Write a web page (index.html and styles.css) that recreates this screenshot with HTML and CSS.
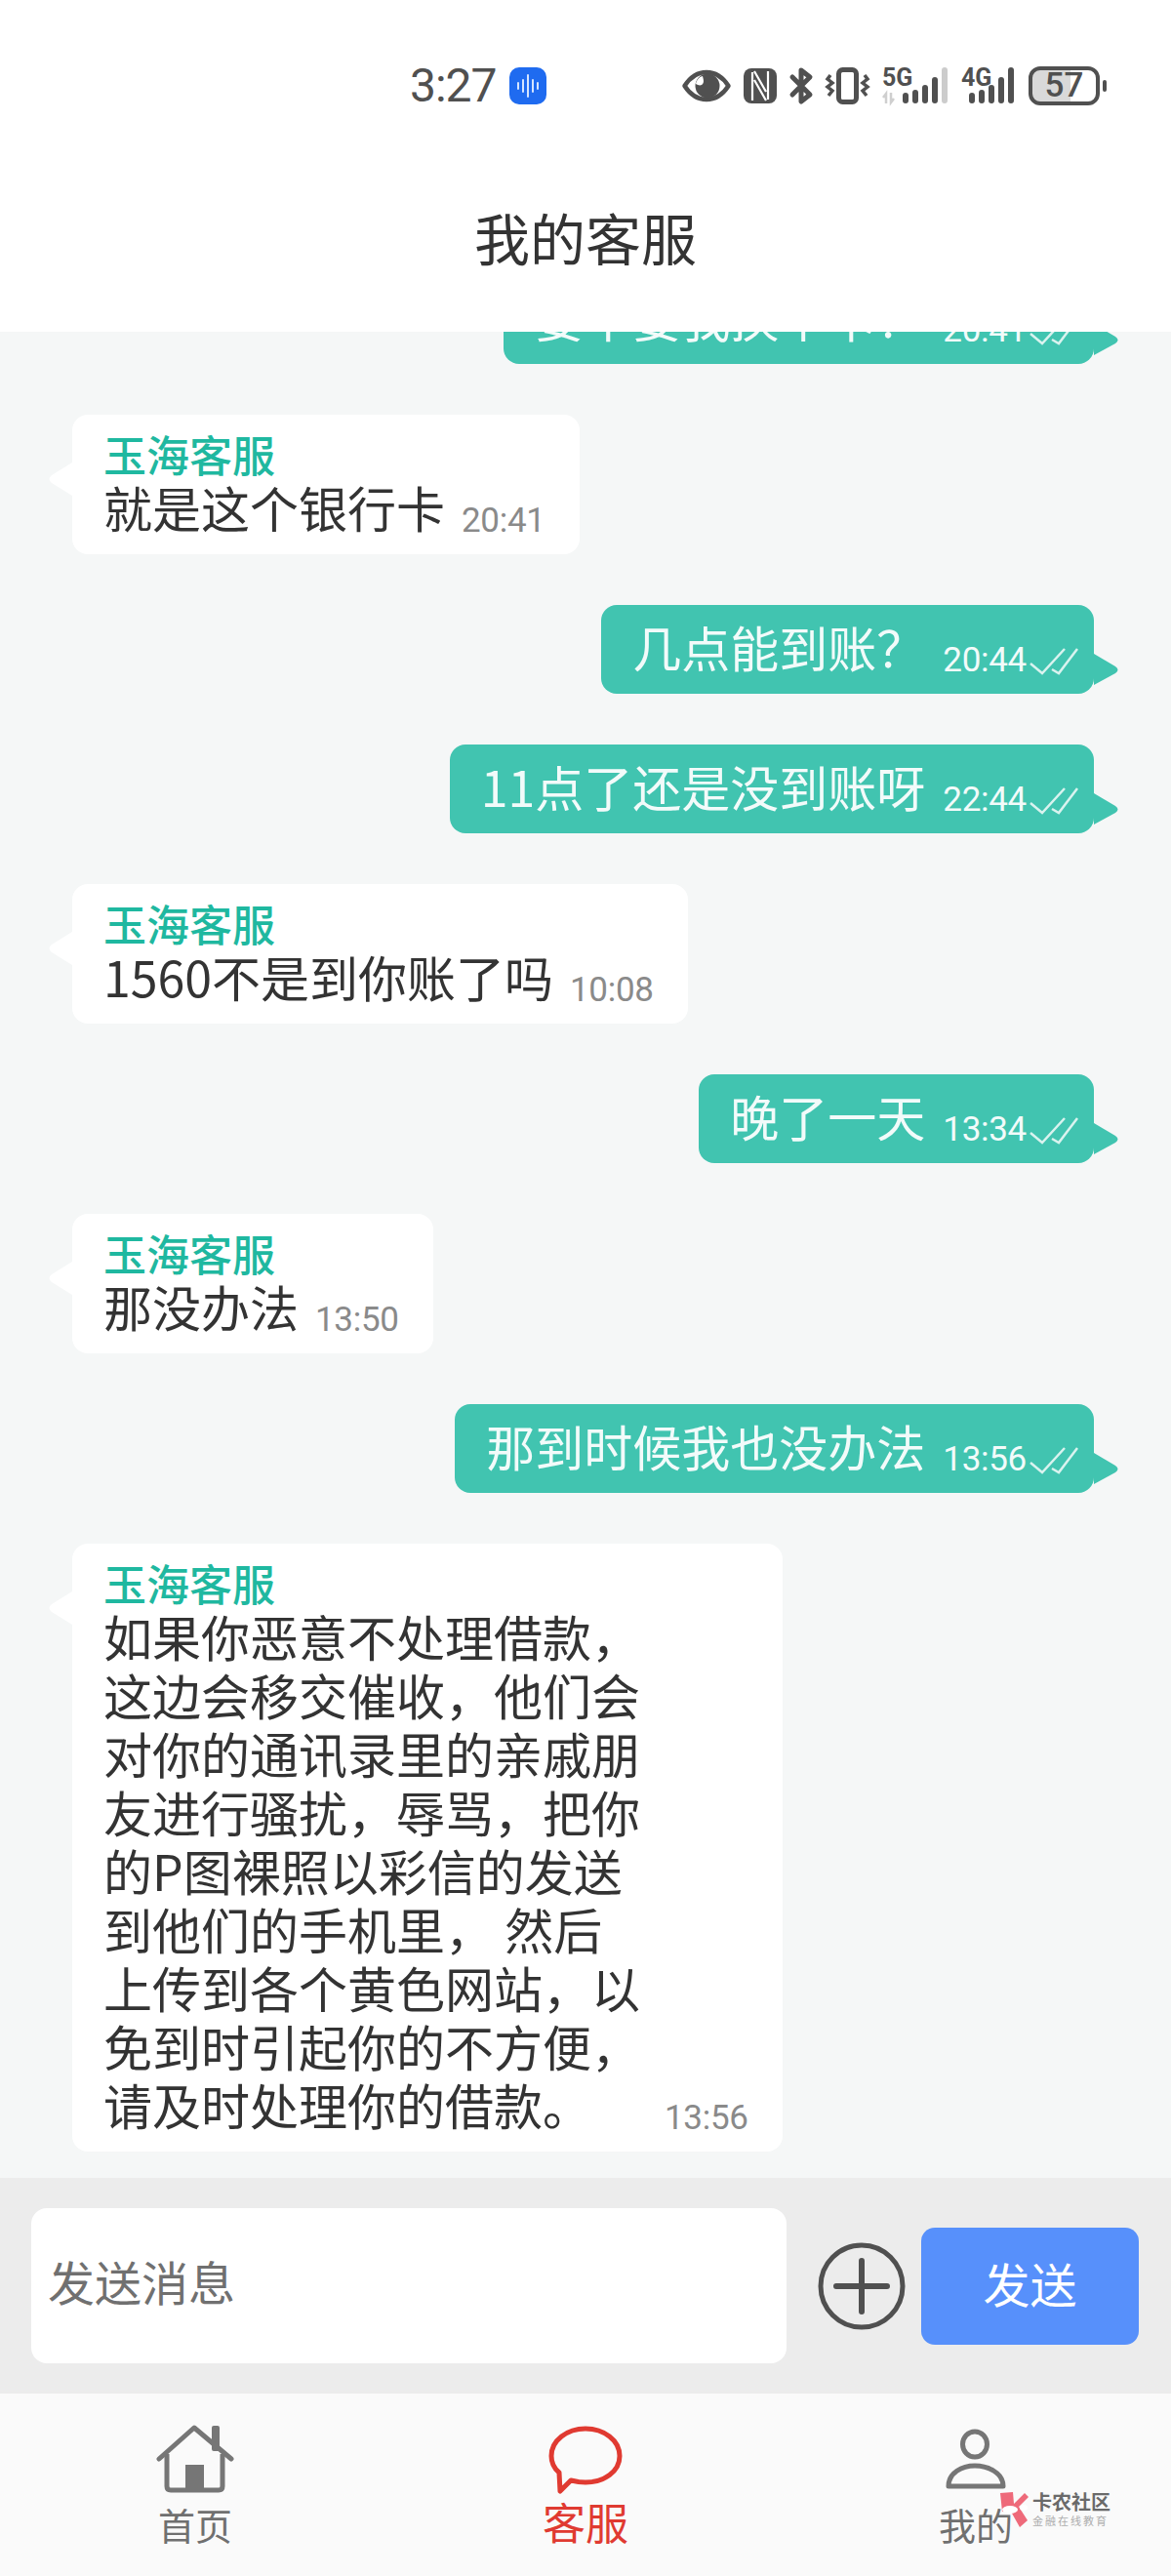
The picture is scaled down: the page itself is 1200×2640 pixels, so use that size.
FILE: index.html
```html
<!DOCTYPE html>
<html lang="zh-CN">
  <head>
    <meta charset="utf-8">
    <meta name="viewport" content="width=device-width, initial-scale=1">
    <title>我的客服</title>
    <link rel="stylesheet" href="styles.css">
  </head>
  <body>
    <div class="app">
      <header class="top">
        <div class="status">
          <span class="clock">3:27</span>
          <svg class="voice" width="38" height="38" viewBox="0 0 38 38">
            <rect width="38" height="38" rx="10" fill="#1f6bf0"/>
            <path d="M9 16v6M14 13v12M19 8v22M24 13v12M29 16v6" stroke="#d5e4ff" stroke-width="2" stroke-linecap="round"/>
          </svg>
          <div class="status-icons">
            <svg width="50" height="36" viewBox="0 0 50 36">
              <path d="M2.500 18C9 8 16 4 25 4s16 4 22.500 14C41 28 34 32 25 32S9 28 2.500 18Z" fill="none" stroke="#505050" stroke-width="4.500" stroke-linejoin="round"/>
              <circle cx="26" cy="18" r="12.500" fill="#505050"/>
              <path d="M21 8c1 4 2 7-1 9-2 1-4 0-6-1 1-4 3-7 7-8Z" fill="#fff"/>
            </svg>
            <svg width="34" height="36" viewBox="0 0 34 36">
              <rect width="34" height="36" rx="8" fill="#505050"/>
              <path d="M9 33V4M25 3v29M11 3l12 21M11 12l12 21" fill="none" stroke="#fff" stroke-width="2.200"/>
            </svg>
            <svg width="24" height="38" viewBox="0 0 24 38">
              <path d="M3 10l18 18-9 7V3l9 7L3 28" fill="none" stroke="#505050" stroke-width="5" stroke-linejoin="round" stroke-linecap="round"/>
            </svg>
            <svg width="45" height="38" viewBox="0 0 45 38">
              <rect x="13.500" y="2.500" width="18" height="33" rx="4" fill="none" stroke="#505050" stroke-width="5"/>
              <path d="M5 8L2 12l5 4-5 4 5 4-4 5M40 8l3 4-5 4 5 4-5 4 4 5" fill="none" stroke="#505050" stroke-width="3.500"/>
            </svg>
            <svg width="68" height="38" viewBox="0 0 68 38">
              <text class="net" x="0" y="19">5G</text>
              <path d="M4 37V27l-3 4M9 26v10l3-4" fill="none" stroke="#cfcfcf" stroke-width="2.500"/>
              <g fill="#505050">
                <rect x="21" y="26" width="6" height="11" rx="3"/>
                <rect x="31" y="23" width="6" height="14" rx="3"/>
                <rect x="41" y="18" width="6" height="19" rx="3"/>
                <rect x="51" y="10" width="6" height="27" rx="3"/>
              </g>
              <rect x="61" y="0" width="6" height="37" rx="3" fill="#cccccc"/>
            </svg>
            <svg width="55" height="38" viewBox="0 0 55 38">
              <text class="net" x="0" y="19">4G</text>
              <g fill="#505050">
                <rect x="8" y="26" width="6" height="11" rx="3"/>
                <rect x="18" y="23" width="6" height="14" rx="3"/>
                <rect x="28" y="18" width="6" height="19" rx="3"/>
                <rect x="38" y="10" width="6" height="27" rx="3"/>
                <rect x="48" y="0" width="6" height="37" rx="3"/>
              </g>
            </svg>
            <div class="battery">57</div>
          </div>
        </div>
        <h1 class="title">我的客服</h1>
      </header>

      <main class="chat">
        <div class="msg sent">
          <div class="text">要不要我换个卡？</div>
          <span class="time">20:41</span>
          <svg class="ticks" width="52" height="28" viewBox="0 0 52 28"><path d="M2 16l12 10L37 1M24 22l7 4L50 1"/></svg>
        </div>

        <div class="msg recv">
          <div class="name">玉海客服</div>
          <div class="line">
            <div class="text">就是这个银行卡</div>
            <span class="time">20:41</span>
          </div>
        </div>

        <div class="msg sent">
          <div class="text">几点能到账？</div>
          <span class="time">20:44</span>
          <svg class="ticks" width="52" height="28" viewBox="0 0 52 28"><path d="M2 16l12 10L37 1M24 22l7 4L50 1"/></svg>
        </div>

        <div class="msg sent">
          <div class="text">11点了还是没到账呀</div>
          <span class="time">22:44</span>
          <svg class="ticks" width="52" height="28" viewBox="0 0 52 28"><path d="M2 16l12 10L37 1M24 22l7 4L50 1"/></svg>
        </div>

        <div class="msg recv">
          <div class="name">玉海客服</div>
          <div class="line">
            <div class="text">1560不是到你账了吗</div>
            <span class="time">10:08</span>
          </div>
        </div>

        <div class="msg sent">
          <div class="text">晚了一天</div>
          <span class="time">13:34</span>
          <svg class="ticks" width="52" height="28" viewBox="0 0 52 28"><path d="M2 16l12 10L37 1M24 22l7 4L50 1"/></svg>
        </div>

        <div class="msg recv">
          <div class="name">玉海客服</div>
          <div class="line">
            <div class="text">那没办法</div>
            <span class="time">13:50</span>
          </div>
        </div>

        <div class="msg sent">
          <div class="text">那到时候我也没办法</div>
          <span class="time">13:56</span>
          <svg class="ticks" width="52" height="28" viewBox="0 0 52 28"><path d="M2 16l12 10L37 1M24 22l7 4L50 1"/></svg>
        </div>

        <div class="msg recv long">
          <div class="name">玉海客服</div>
          <div class="line">
            <div class="text">如果你恶意不处理借款，这边会移交催收，他们会对你的通讯录里的亲戚朋友进行骚扰，辱骂，把你的P图裸照以彩信的发送到他们的手机里， 然后上传到各个黄色网站，以免到时引起你的不方便，请及时处理你的借款。</div>
            <span class="time">13:56</span>
          </div>
        </div>
      </main>

      <div class="composer">
        <div class="field">发送消息</div>
        <svg class="plus" width="90" height="90" viewBox="0 0 90 90">
          <circle cx="45" cy="45" r="42" fill="none" stroke="#505050" stroke-width="5"/>
          <path d="M19 45h52M45 19v52" stroke="#505050" stroke-width="6" stroke-linecap="round"/>
        </svg>
        <div class="send">发送</div>
      </div>

      <nav class="tabs">
        <div class="tab">
          <svg width="80" height="72" viewBox="0 0 80 72">
            <rect x="57" y="2" width="8" height="26" rx="2" fill="#767676"/>
            <path d="M3 36L39 4l38 32" fill="none" stroke="#767676" stroke-width="5" stroke-linecap="round" stroke-linejoin="round"/>
            <path d="M11 31v33q0 4 4 4h49q4 0 4-4V31" fill="none" stroke="#767676" stroke-width="5"/>
            <rect x="30" y="42" width="19" height="27" fill="#767676"/>
          </svg>
          <span>首页</span>
        </div>
        <div class="tab active">
          <svg width="80" height="72" viewBox="0 0 80 72">
            <path d="M13 50C7 45 5 39 5 33 5 17 21 5 40 5s35 12 35 28-16 27-35 27c-6 0-11-1-15-2L14 69Z" fill="none" stroke="#e03a31" stroke-width="5" stroke-linejoin="round"/>
          </svg>
          <span>客服</span>
        </div>
        <div class="tab">
          <svg width="80" height="72" viewBox="0 0 80 72">
            <ellipse cx="39" cy="21" rx="12.500" ry="13" fill="none" stroke="#767676" stroke-width="5"/>
            <path d="M12 64c0-14 14-21 27-21s29 7 29 21Z" fill="none" stroke="#767676" stroke-width="5" stroke-linejoin="round"/>
          </svg>
          <span>我的</span>
        </div>
      </nav>

      <div class="watermark">
        <svg width="32" height="38" viewBox="0 0 32 38">
          <path d="M3 3l13-1 1 12L28 3l4 4-10 10 9 14-8 7-9-16H5Z" fill="#ee6a7a"/>
          <ellipse cx="13" cy="20" rx="8" ry="4" fill="#fff"/>
          <ellipse cx="27" cy="18" rx="4" ry="3" fill="#fff"/>
        </svg>
        <div class="wm-text">
          <b>卡农社区</b>
          <small>金融在线教育</small>
        </div>
      </div>
    </div>
  </body>
</html>
```

FILE: styles.css
```css
* {
  box-sizing: border-box;
}
html, body {
  margin: 0;
  padding: 0;
}
body {
  font-family: "Noto Sans CJK SC", "Noto Sans", sans-serif;
  color: #333;
  background: #fff;
}
.app {
  position: relative;
  display: flex;
  flex-direction: column;
  width: 1200px;
  height: 2640px;
  overflow: hidden;
}

/* header */
.top {
  flex: none;
  height: 340px;
  background: #fff;
}
.status {
  display: flex;
  align-items: center;
  height: 176px;
  padding: 0 66px 0 420px;
  color: #505050;
}
.clock {
  font-family: Roboto, sans-serif;
  font-size: 48px;
  line-height: 1;
  letter-spacing: -1px;
}
.voice {
  margin-left: 13px;
}
.status-icons {
  display: flex;
  align-items: center;
  gap: 13px;
  margin-left: auto;
}
.status-icons svg {
  overflow: visible;
}
.net {
  font-family: "Liberation Sans Narrow", Roboto, sans-serif;
  font-size: 25px;
  font-weight: 700;
  fill: #505050;
}
.battery {
  position: relative;
  width: 73px;
  height: 40px;
  margin-left: 1px;
  margin-right: 7px;
  border: 4px solid #505050;
  border-radius: 12px;
  background: linear-gradient(90deg, #d9d9d9 60%, transparent 60%);
  font-family: Roboto, sans-serif;
  font-size: 35px;
  font-weight: 500;
  line-height: 32px;
  text-align: center;
}
.battery::after {
  content: "";
  position: absolute;
  top: 10px;
  right: -11px;
  width: 4px;
  height: 12px;
  border-radius: 2px;
  background: #505050;
}
.title {
  margin: 0;
  font-size: 57px;
  font-weight: 400;
  line-height: 132px;
  text-align: center;
}

/* messages */
.chat {
  flex: 1;
  min-height: 0;
  display: flex;
  flex-direction: column;
  justify-content: flex-end;
  gap: 52px;
  padding: 0 79px 27px 74px;
  overflow: hidden;
  background: #f5f7f7;
}
.msg {
  position: relative;
  flex: none;
  border-radius: 16px;
}
.msg::after {
  content: "";
  position: absolute;
  width: 26px;
  height: 34px;
}
.text {
  margin: -3px 0 3px;
  font-size: 50px;
  line-height: 60px;
}
.time {
  flex: none;
  font-family: Roboto, sans-serif;
  font-size: 35px;
  line-height: 36px;
  letter-spacing: -0.3px;
}
.sent {
  display: flex;
  align-items: flex-end;
  align-self: flex-end;
  padding: 15px 15px 16px 32px;
  background: #41c4b0;
  color: #f2fbfa;
}
.sent::after {
  top: 50px;
  left: 100%;
  background: #41c4b0;
  clip-path: path("M0 0 L22 13 Q27 16.500 22 20 L0 32 Z");
}
.sent .time {
  margin-left: 18px;
}
.ticks {
  margin: 0 0 3px 2px;
  fill: none;
  stroke: #d9f3ef;
  stroke-width: 2.500;
}
.recv {
  align-self: flex-start;
  padding: 17px 35px 16px 32px;
  background: #fff;
}
.recv::after {
  top: 49px;
  right: 100%;
  background: #fff;
  clip-path: path("M26 0 L5 13 Q0 17 5 21 L26 34 Z");
}
.name {
  margin: -2px 0 2px;
  color: #1fb8a0;
  font-size: 44px;
  font-weight: 500;
  line-height: 50px;
}
.line {
  display: flex;
  align-items: flex-end;
  gap: 17px;
}
.recv .time {
  color: #8a8a8a;
}
.long .text {
  width: 558px;
}

/* input row */
.composer {
  flex: none;
  display: flex;
  align-items: center;
  height: 221px;
  padding: 0 33px 0 32px;
  background: #ececec;
}
.field {
  width: 774px;
  height: 159px;
  padding-left: 17px;
  border-radius: 16px;
  background: #fff;
  color: #707070;
  font-size: 48px;
  line-height: 149px;
}
.plus {
  margin-left: 32px;
}
.send {
  width: 223px;
  height: 120px;
  margin-left: 16px;
  border-radius: 14px;
  background: #5790fb;
  color: #fff;
  font-size: 48px;
  line-height: 112px;
  text-align: center;
}

/* bottom tabs */
.tabs {
  flex: none;
  display: grid;
  grid-template-columns: repeat(3, 1fr);
  height: 187px;
  padding-top: 31px;
  background: #fafafa;
}
.tab {
  display: flex;
  flex-direction: column;
  align-items: center;
  color: #707070;
  font-size: 38px;
  line-height: 44px;
}
.tab span {
  margin-top: 9px;
}
.tab.active {
  color: #e03a31;
  font-size: 44px;
}
.tab.active span {
  margin-top: 6px;
}

/* forum watermark over the tab bar */
.watermark {
  position: absolute;
  top: 2552px;
  left: 1022px;
  display: flex;
  gap: 4px;
}
.wm-text {
  display: flex;
  flex-direction: column;
  color: #6a6a6a;
}
.wm-text b {
  font-size: 20px;
  line-height: 24px;
}
.wm-text small {
  color: #adadad;
  font-size: 11px;
  line-height: 14px;
  letter-spacing: 2px;
}
```
